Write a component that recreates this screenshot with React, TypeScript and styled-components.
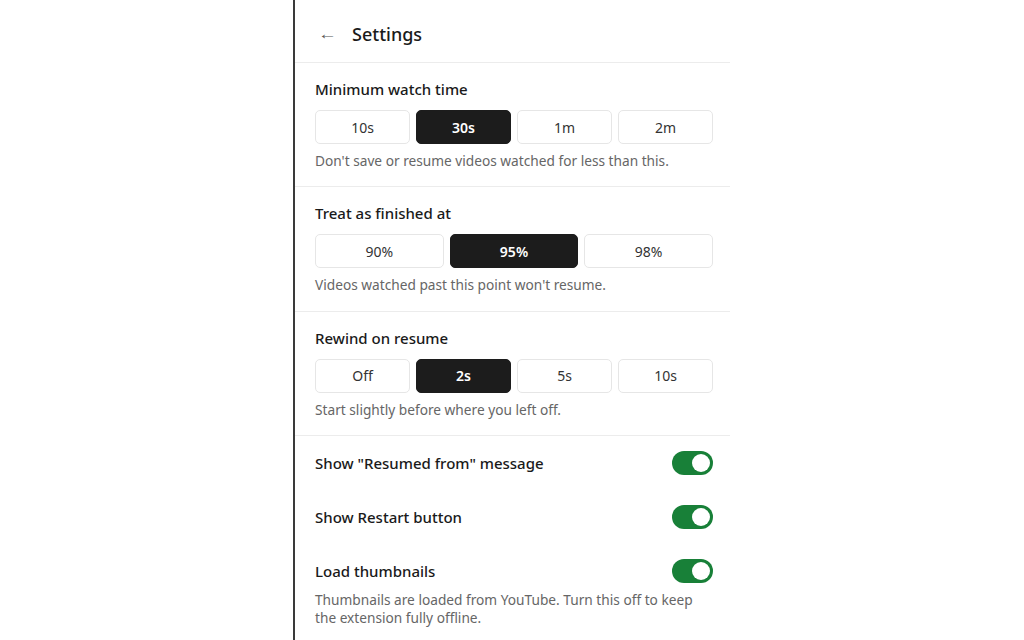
import React, { useState } from "react";
import styled, { createGlobalStyle } from "styled-components";

const Global = createGlobalStyle`
  html, body { margin: 0; padding: 0; background: #ffffff; }
  body { font-family: "Segoe UI", "Noto Sans", "Open Sans", sans-serif; color: #1a1a1a; }
  * { box-sizing: border-box; }
`;

const Page = styled.div`
  display: flex;
  justify-content: flex-start;
  min-height: 640px;
  padding-left: 293px;
`;

const Panel = styled.div`
  width: 437px;
  min-height: 640px;
  border-left: 2px solid #3a3a3a;
  background: #fff;
  display: flex;
  flex-direction: column;
`;

const Header = styled.div`
  display: flex;
  align-items: center;
  gap: 15px;
  height: 63px;
  padding: 5px 20px 0 23px;
  border-bottom: 1px solid #ececec;
`;

const BackArrow = styled.span`
  font-size: 19px;
  color: #555;
  line-height: 1;
  transform: scaleY(0.8);
`;

const Title = styled.h1`
  margin: 0;
  font-size: 18px;
  font-weight: 500;
  color: #1a1a1a;
`;

const Section = styled.div`
  padding: 16px 17px 16px 20px;
  border-bottom: 1px solid #ececec;
  display: flex;
  flex-direction: column;
`;

const Label = styled.div`
  font-size: 15px;
  font-weight: 500;
  line-height: 20px;
  color: #1a1a1a;
`;

const Options = styled.div`
  display: flex;
  gap: 6px;
  margin-top: 11px;
`;

const Option = styled.button<{ $active?: boolean }>`
  flex: 1;
  height: 34px;
  border-radius: 5px;
  border: 1px solid ${(p) => (p.$active ? "#1c1c1c" : "#e6e6e6")};
  background: ${(p) => (p.$active ? "#1c1c1c" : "#fff")};
  color: ${(p) => (p.$active ? "#fff" : "#333")};
  font-family: inherit;
  font-size: 14px;
  font-weight: ${(p) => (p.$active ? 600 : 400)};
  cursor: pointer;
  padding: 0;
`;

const Desc = styled.div`
  margin-top: 8px;
  font-size: 13.7px;
  line-height: 18.34px;
  color: #666;
`;

const ToggleList = styled.div`
  padding: 0 17px 0 20px;
  display: flex;
  flex-direction: column;
`;

const ToggleItem = styled.div`
  padding: 15px 0;
  display: flex;
  flex-direction: column;
`;

const ToggleRow = styled.div`
  display: flex;
  align-items: center;
  justify-content: space-between;
  min-height: 24px;
`;

const ToggleLabel = styled.span`
  font-size: 15px;
  font-weight: 500;
  color: #1a1a1a;
`;

const Switch = styled.button<{ $on: boolean }>`
  width: 41px;
  height: 24px;
  border-radius: 12px;
  border: none;
  padding: 0;
  background: ${(p) => (p.$on ? "#188038" : "#ccc")};
  position: relative;
  cursor: pointer;
  &::after {
    content: "";
    position: absolute;
    top: 3px;
    left: ${(p) => (p.$on ? "20px" : "3px")};
    width: 18px;
    height: 18px;
    border-radius: 50%;
    background: #fff;
  }
`;

const ToggleDesc = styled(Desc)`
  margin-top: 8px;
  line-height: 18px;
  padding-right: 10px;
`;

type Group = { label: string; options: string[]; active: number; desc: string };

const groups: Group[] = [
  { label: "Minimum watch time", options: ["10s", "30s", "1m", "2m"], active: 1, desc: "Don't save or resume videos watched for less than this." },
  { label: "Treat as finished at", options: ["90%", "95%", "98%"], active: 1, desc: "Videos watched past this point won't resume." },
  { label: "Rewind on resume", options: ["Off", "2s", "5s", "10s"], active: 1, desc: "Start slightly before where you left off." },
];

export default function App() {
  const [sel, setSel] = useState(groups.map((g) => g.active));
  const [toggles, setToggles] = useState([true, true, true]);
  const toggleItems = [
    { label: 'Show "Resumed from" message' },
    { label: "Show Restart button" },
    { label: "Load thumbnails", desc: "Thumbnails are loaded from YouTube. Turn this off to keep the extension fully offline." },
  ];
  return (
    <>
      <Global />
      <Page>
        <Panel>
          <Header>
            <BackArrow>←</BackArrow>
            <Title>Settings</Title>
          </Header>
          {groups.map((g, gi) => (
            <Section key={g.label}>
              <Label>{g.label}</Label>
              <Options>
                {g.options.map((o, oi) => (
                  <Option
                    key={o}
                    $active={sel[gi] === oi}
                    onClick={() => setSel(sel.map((v, i) => (i === gi ? oi : v)))}
                  >
                    {o}
                  </Option>
                ))}
              </Options>
              <Desc>{g.desc}</Desc>
            </Section>
          ))}
          <ToggleList>
            {toggleItems.map((t, ti) => (
              <ToggleItem key={t.label}>
                <ToggleRow>
                  <ToggleLabel>{t.label}</ToggleLabel>
                  <Switch
                    $on={toggles[ti]}
                    onClick={() => setToggles(toggles.map((v, i) => (i === ti ? !v : v)))}
                  />
                </ToggleRow>
                {t.desc && <ToggleDesc>{t.desc}</ToggleDesc>}
              </ToggleItem>
            ))}
          </ToggleList>
        </Panel>
      </Page>
    </>
  );
}
